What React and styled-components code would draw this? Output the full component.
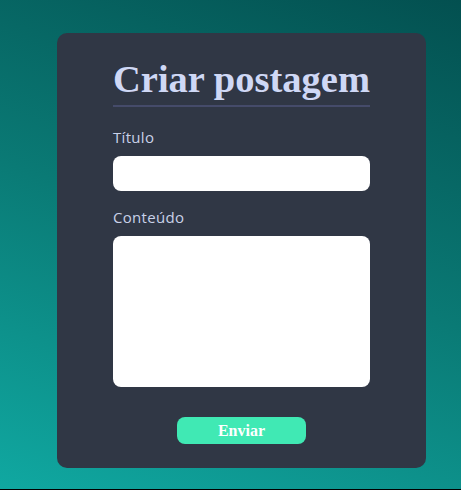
import styled, { createGlobalStyle } from 'styled-components'

const Global = createGlobalStyle`
	html {
		background: #000;
	}
	body {
		margin: 0;
	}
`

const Page = styled.div`
	height: 489px;
	padding: 33px 0 0 57px;
	box-sizing: border-box;
	background: linear-gradient(200deg, #035050 0%, #0a7a75 50%, #10a8a1 100%);
`

const Card = styled.form`
	width: 369px;
	height: 435px;
	box-sizing: border-box;
	padding: 24px 56px 0;
	background-color: #303745;
	border-radius: 10px;
	display: flex;
	flex-direction: column;
`

const Title = styled.h1`
	margin: 0;
	padding-bottom: 4px;
	border-bottom: 2px solid #454b6a;
	font-family: 'Liberation Serif', serif;
	font-size: 38.5px;
	font-weight: bold;
	color: #cfd8f5;
	text-align: center;
	white-space: nowrap;
`

const Label = styled.label`
	font-family: 'Open Sans', Lato, sans-serif;
	font-size: 15px;
	letter-spacing: 0.3px;
	line-height: 20px;
	color: #c9d1e8;
	margin: ${({ $first }) => ($first ? '20px' : '16px')} 0 9px;
`

const Field = styled.div`
	height: ${({ $h }) => $h}px;
	background: #fff;
	border-radius: 8px;
`

const Button = styled.button`
	align-self: center;
	margin-top: 30px;
	width: 129px;
	height: 27px;
	border: none;
	border-radius: 8px;
	background-color: #40e9b4;
	color: #fff;
	font-family: 'Liberation Serif', serif;
	font-size: 16px;
	font-weight: bold;
`

export default function App() {
	return (
		<Page>
			<Global />
			<Card onSubmit={e => e.preventDefault()}>
				<Title>Criar postagem</Title>
				<Label $first>Título</Label>
				<Field $h={35} />
				<Label>Conteúdo</Label>
				<Field $h={151} />
				<Button type="submit">Enviar</Button>
			</Card>
		</Page>
	)
}
